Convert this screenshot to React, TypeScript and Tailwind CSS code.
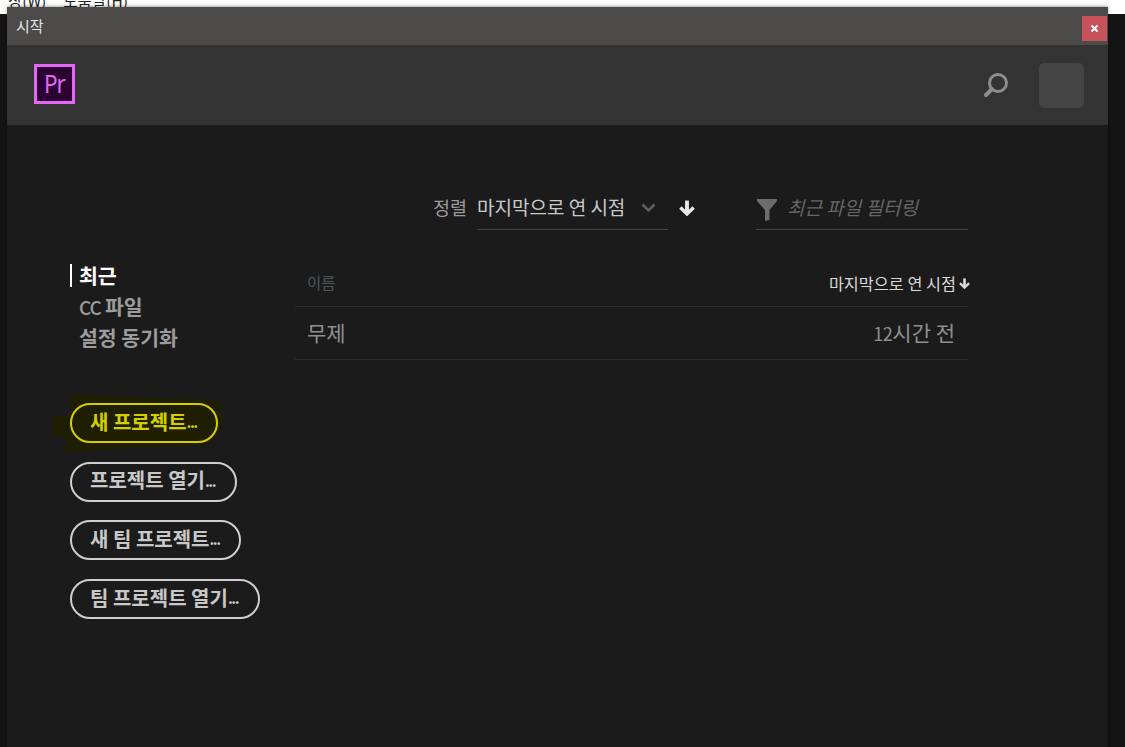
const FONT = "font-['Noto_Sans_CJK_KR','Noto_Sans',sans-serif]";

const navItems = [
  { label: "최근", active: true },
  { label: "파일", prefix: "CC", active: false },
  { label: "설정 동기화", active: false },
];

const PrLogo = () => (
  <div className="w-[41px] h-[40px] -mt-[3px] border-[3px] border-[#e468f5] bg-[#2b0033] flex items-center justify-center">
    <span className="text-[#e468f5] text-[25px] leading-none font-['Noto_Sans',sans-serif] tracking-[-1.5px] scale-x-90">Pr</span>
  </div>
);

const SearchIcon = () => (
  <svg width="26" height="26" viewBox="0 0 26 26" fill="none" stroke="#8d8d8d">
    <circle cx="15" cy="11" r="8.5" strokeWidth="3" />
    <path d="M9 17 L3 23" strokeWidth="4" strokeLinecap="round" />
  </svg>
);

const FilterIcon = () => (
  <svg width="20" height="22" viewBox="0 0 20 22" fill="#6c6c6c">
    <path d="M0 0 H20 V2 L12.5 11 V21 L8 22 V11 L0 2 Z" />
  </svg>
);

const DownArrow = ({ size, color }: { size: number; color: string }) => (
  <svg width={size} height={size} viewBox="0 0 14 14" fill="none" stroke={color}>
    <path d="M7 0.5 V12" strokeWidth="3.4" />
    <path d="M1.2 6.5 L7 12.2 L12.8 6.5" strokeWidth="3" />
  </svg>
);

const Pill = ({ label, width, highlight }: { label: string; width: string; highlight?: boolean }) => (
  <button
    className={`relative h-[40px] rounded-full border-2 text-[20px] font-bold leading-none flex items-center pl-[18px] pb-[3px] ${width} ${
      highlight ? "border-[#d4d000] text-[#d4d000] bg-[#1f1e00]" : "border-[#cfcfcf] text-[#c8c8c8]"
    }`}
  >
    {label}
    <span className="tracking-[-1.5px] text-[15px]">...</span>
  </button>
);

export default function App() {
  return (
    <div className={`relative w-[1125px] h-[747px] overflow-hidden bg-[#141414] ${FONT}`}>
      <div className="h-[14px] bg-white overflow-hidden text-[15.5px] leading-none text-[#222] pl-[8px]">
        <div className="-mt-[7px] flex gap-[17px]">
          <span>창(W)</span>
          <span>도움말(H)</span>
        </div>
      </div>

      {/* start window */}
      <div className="absolute left-[7px] top-[7px] w-[1101px] h-[760px] flex flex-col bg-[#1b1b1b] shadow-[0_-1px_3px_rgba(0,0,0,0.35)]">
        <div className="h-[38px] shrink-0 bg-[#4c4b49] flex items-start justify-between">
          <span className="text-[15px] leading-none text-[#e6e6e6] pl-[9px] pt-[11px]">시작</span>
          <div className="w-[25px] h-[25px] mt-[9px] mr-[1px] bg-[#c8525a] text-white flex items-center justify-center">
            <svg width="9" height="9" viewBox="0 0 9 9" stroke="#fff" strokeWidth="2">
              <path d="M1.5 1.5 L7.5 7.5 M7.5 1.5 L1.5 7.5" />
            </svg>
          </div>
        </div>

        <div className="h-[80px] shrink-0 bg-[#333333] flex items-center justify-between pl-[27px] pr-[24px]">
          <PrLogo />
          <div className="flex items-center gap-[30px]">
            <SearchIcon />
            <div className="w-[45px] h-[45px] rounded-[5px] bg-[#444444]" />
          </div>
        </div>

        <div className="flex pl-[63px]">
          {/* left column */}
          <div className="w-[225px] shrink-0 pt-[135px]">
            <div className="flex flex-col">
              {navItems.map((item) => (
                <div
                  key={item.label}
                  className={`h-[31px] flex items-center text-[20.5px] font-bold leading-none pl-[9px] ${
                    item.active ? "text-white" : "text-[#9c9c9c]"
                  }`}
                >
                  {item.active && <span className="w-[2px] h-[23px] bg-white -ml-[9px] mr-[7px]" />}
                  {item.prefix && <span className="font-medium text-[19px] tracking-[-1px] mr-[4px]">{item.prefix}</span>}
                  {item.label}
                </div>
              ))}
            </div>

            <div className="relative mt-[50px] flex flex-col items-start gap-[18.7px]">
              <svg className="absolute -left-[18px] -top-[11px]" width="172" height="62" viewBox="0 0 172 62" fill="#1f1e00">
                <path d="M20 2 L78 5 L148 7 L166 10 L170 13 L170 33 L166 46 L153 53 L68 57 L14 60 L13 44 L1 44 L1 25 L18 23 Z" />
              </svg>
              <Pill label="새 프로젝트" width="w-[148px]" highlight />
              <Pill label="프로젝트 열기" width="w-[167px]" />
              <Pill label="새 팀 프로젝트" width="w-[171px]" />
              <Pill label="팀 프로젝트 열기" width="w-[190px]" />
            </div>
          </div>

          {/* main column */}
          <div className="w-[673px] shrink-0">
            <div className="flex items-start h-[135px] pt-[69px]">
              <span className="ml-[138px] w-[44px] text-[18.5px] leading-[26px] text-[#9a9a9a]">정렬</span>
              <div className="w-[191px] h-[36px] border-b border-[#444] flex justify-between pr-[12px] text-[19px] leading-[26px] text-[#c9c9c9]">
                <span>마지막으로 연 시점</span>
                <svg className="mt-[9px]" width="15" height="10" viewBox="0 0 15 10" fill="none" stroke="#5e5e5e" strokeWidth="2.5">
                  <path d="M1.5 1.5 L7.5 7.5 L13.5 1.5" />
                </svg>
              </div>
              <span className="ml-[11px] mt-[6px]">
                <DownArrow size={16} color="#e8e8e8" />
              </span>
              <div className="ml-[61px] w-[212px] h-[36px] border-b border-[#444] flex">
                <span className="mt-[5px] ml-[1px]">
                  <FilterIcon />
                </span>
                <span className="ml-[10px] text-[19px] leading-[26px] italic text-[#666666]">최근 파일 필터링</span>
              </div>
            </div>

            <div className="h-[47px] flex items-center justify-between border-b border-[#2f2f2f]">
              <span className="pl-[12px] text-[15.5px] text-[#4c5560]">이름</span>
              <span className="flex items-center gap-[3px] text-[16.3px] text-[#d8d8d8] -mr-[2px]">
                마지막으로 연 시점
                <DownArrow size={11} color="#d8d8d8" />
              </span>
            </div>
            <div className="h-[53px] flex items-center justify-between border-b border-[#2f2f2f] pl-[12px] pr-[13px] text-[21px] text-[#8f8f8f]">
              <span>무제</span>
              <span>
                <span className="text-[18px] tracking-[-0.5px]">12</span>시간 전
              </span>
            </div>
          </div>
        </div>
      </div>
    </div>
  );
}
